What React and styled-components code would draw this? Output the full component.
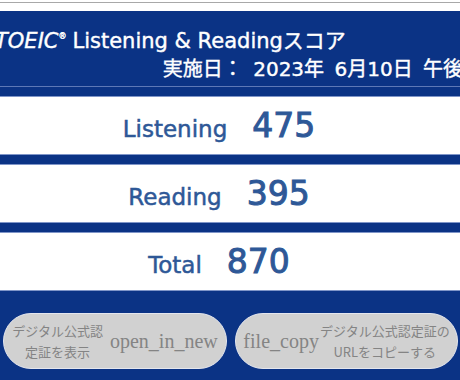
import React from 'react';
import styled, { createGlobalStyle } from 'styled-components';

const GlobalStyle = createGlobalStyle`
  html, body {
    margin: 0;
    padding: 0;
    background: #ffffff;
  }
  body {
    font-family: "DejaVu Sans", "Noto Sans CJK JP", sans-serif;
    width: 460px;
    height: 380px;
    overflow: hidden;
  }
`;

const TopStrip = styled.div`
  border-top: 1px solid #a8a8a8;
  margin-top: 2px;
  height: 8px;
  background: #ffffff;
`;

const Page = styled.div`
  background: #0b3385;
  display: flex;
  flex-direction: column;
  gap: 9px;
  height: 369px;
`;

const Header = styled.header`
  height: 75px;
  border-bottom: 1px solid #5d78b6;
  display: flex;
  justify-content: center;
  overflow: hidden;
  color: #ffffff;
  -webkit-text-stroke: 0.4px #ffffff;
`;

const HeaderInner = styled.div`
  flex: 0 0 470px;
  padding-top: 12px;
  display: flex;
  flex-direction: column;
  white-space: nowrap;
`;

const Title = styled.div`
  font-size: 21px;
  line-height: 28px;
  text-align: left;
`;

const Brand = styled.span`
  font-style: italic;
`;

const Reg = styled.sup`
  font-size: 8px;
  vertical-align: 9px;
  margin-right: 6px;
`;

const DateLine = styled.div`
  font-size: 20px;
  line-height: 28px;
  text-align: right;
  word-spacing: 4px;
  padding-right: 2px;
`;

const ScoreRow = styled.div`
  background: #ffffff;
  border-top: 1px solid #7f95c8;
  border-bottom: 1px solid #7f95c8;
  display: flex;
  justify-content: center;
  align-items: baseline;
  gap: 25px;
  padding: 4px 22px 0 0;
  box-sizing: border-box;
  height: 59px;
  color: #2e5897;
`;

const Label = styled.span`
  font-size: 23px;
  line-height: 50px;
  -webkit-text-stroke: 0.5px #2e5897;
`;

const Score = styled.span`
  font-size: 33px;
  line-height: 50px;
  -webkit-text-stroke: 1px #2e5897;
`;

const Actions = styled.div`
  display: grid;
  grid-template-columns: 224px 223px;
  gap: 8px;
  padding: 13px 2px 0 3px;
`;

const Pill = styled.button`
  height: 56px;
  border-radius: 28px;
  background: #d1d1d1;
  border: 1.5px solid #e4e6ee;
  color: #848484;
  display: flex;
  align-items: center;
  justify-content: center;
  gap: ${(p) => p.$gap}px;
  padding: 0;
  font-family: "DejaVu Sans", "Noto Sans CJK JP", sans-serif;
`;

const PillText = styled.span`
  font-size: 13px;
  line-height: 21px;
  text-align: center;
  white-space: nowrap;
  font-family: "Noto Sans CJK JP", sans-serif;
`;

const IconName = styled.span`
  font-family: "Liberation Serif", serif;
  font-size: 20px;
  line-height: 24px;
`;

const scores = [
  { label: 'Listening', value: 475 },
  { label: 'Reading', value: 395 },
  { label: 'Total', value: 870 },
];

export default function App() {
  return (
    <>
      <GlobalStyle />
      <TopStrip />
      <Page>
        <Header>
          <HeaderInner>
            <Title>
              <Brand>TOEIC</Brand>
              <Reg>®</Reg>
              Listening &amp; Readingスコア
            </Title>
            <DateLine>実施日： 2023年 6月10日 午後</DateLine>
          </HeaderInner>
        </Header>
        {scores.map((s) => (
          <ScoreRow key={s.label}>
            <Label>{s.label}</Label>
            <Score>{s.value}</Score>
          </ScoreRow>
        ))}
        <Actions>
          <Pill $gap={7}>
            <PillText>
              デジタル公式認
              <br />
              定証を表示
            </PillText>
            <IconName>open_in_new</IconName>
          </Pill>
          <Pill $gap={1}>
            <IconName>file_copy</IconName>
            <PillText>
              デジタル公式認定証の
              <br />
              URLをコピーする
            </PillText>
          </Pill>
        </Actions>
      </Page>
    </>
  );
}
